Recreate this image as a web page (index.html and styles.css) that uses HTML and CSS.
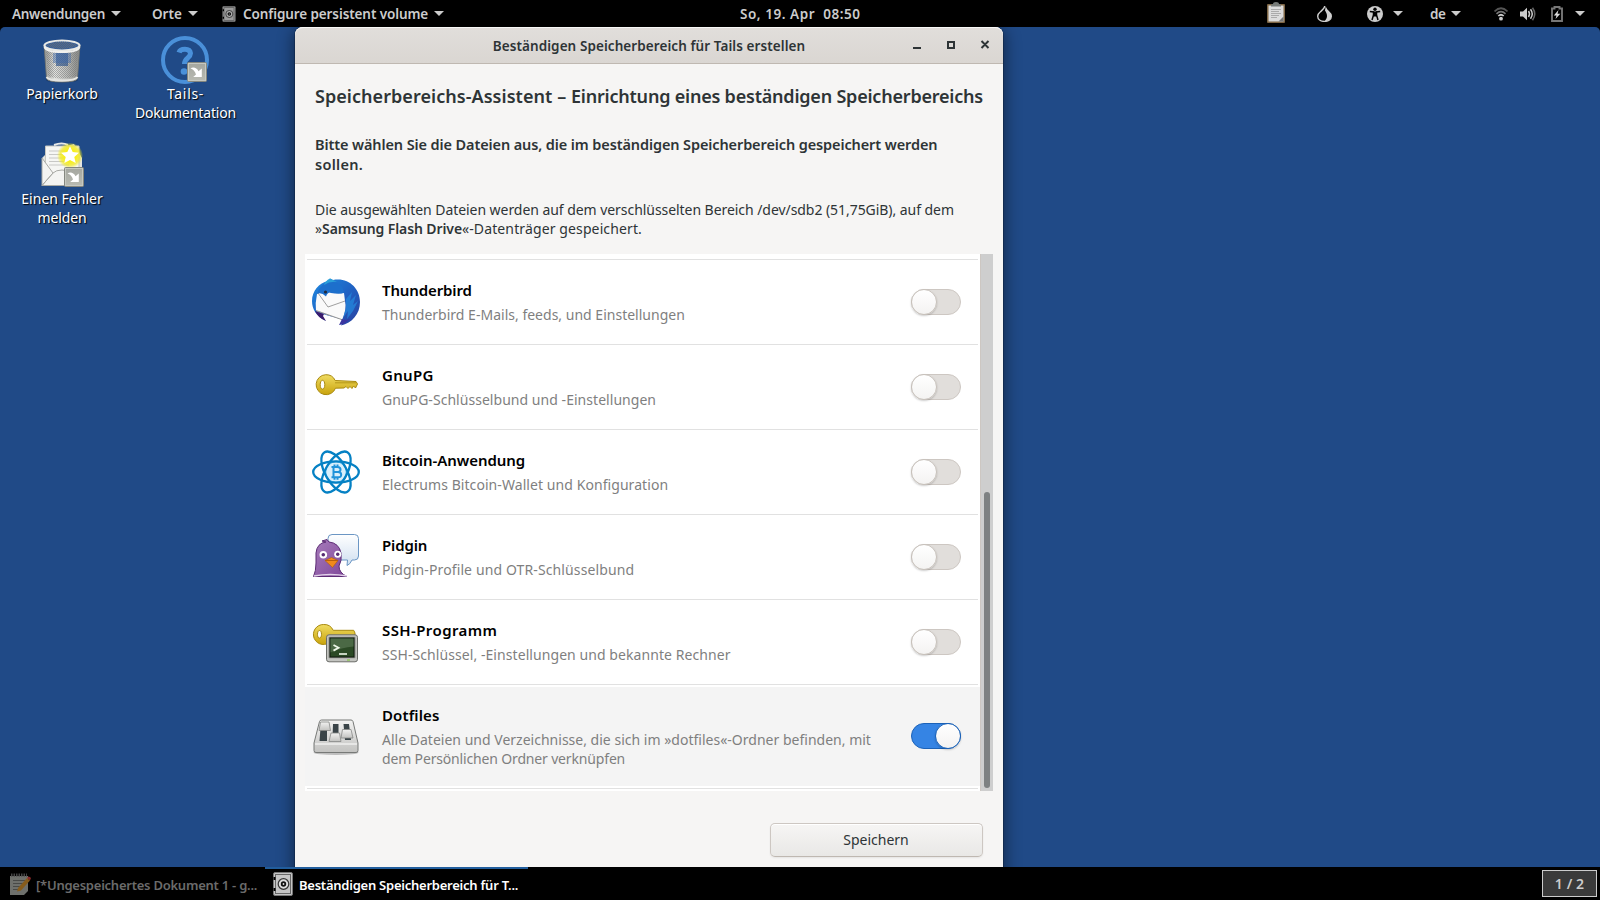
FILE: index.html
```
<!DOCTYPE html>
<html lang="de">
<head>
<meta charset="utf-8">
<title>Beständigen Speicherbereich für Tails erstellen</title>
<link rel="stylesheet" href="styles.css">
</head>
<body>
<svg width="0" height="0" class="defs">
  <defs>
    <linearGradient id="gold" x1="0" y1="0" x2="0" y2="1"><stop offset="0" stop-color="#f0dc62"/><stop offset="1" stop-color="#c9a30c"/></linearGradient>
    <linearGradient id="emb" x1="0" y1="0" x2="0" y2="1"><stop offset="0" stop-color="#a4a69f"/><stop offset="1" stop-color="#b9bbb2"/></linearGradient>
    <linearGradient id="tb" x1="0" y1="0" x2="1" y2="1"><stop offset="0" stop-color="#1f8ae0"/><stop offset=".5" stop-color="#1f63c4"/><stop offset="1" stop-color="#2a3f9e"/></linearGradient>
    <linearGradient id="bub" x1="0" y1="0" x2="0" y2="1"><stop offset="0" stop-color="#fff"/><stop offset="1" stop-color="#cfdff0"/></linearGradient>
    <linearGradient id="pur" x1="0" y1="0" x2="1" y2="1"><stop offset="0" stop-color="#a77dbb"/><stop offset="1" stop-color="#7f4699"/></linearGradient>
    <linearGradient id="met" x1="0" y1="0" x2="0" y2="1"><stop offset="0" stop-color="#f2f2f1"/><stop offset="1" stop-color="#c2c2c0"/></linearGradient>
    <linearGradient id="can" x1="0" y1="0" x2="1" y2="0"><stop offset="0" stop-color="#8f908d"/><stop offset=".3" stop-color="#e3e4e1"/><stop offset=".65" stop-color="#bbbcb9"/><stop offset="1" stop-color="#858683"/></linearGradient>
    <radialGradient id="glow"><stop offset=".45" stop-color="#f7ee1c"/><stop offset=".75" stop-color="#f2ea20" stop-opacity=".75"/><stop offset="1" stop-color="#f2ea20" stop-opacity="0"/></radialGradient>
    <pattern id="mesh" width="2" height="2" patternUnits="userSpaceOnUse"><rect width="1" height="1" fill="#6d6f70"/><rect x="1" y="1" width="1" height="1" fill="#6d6f70"/></pattern>
    <symbol id="emblem" viewBox="0 0 20 20">
      <rect x=".5" y=".5" width="19" height="19" rx="1" fill="url(#emb)" stroke="#85877f"/>
      <rect x="1.5" y="1.5" width="17" height="17" fill="none" stroke="#c6c8c0"/>
      <path d="M3.5 6.500C6 4.600 9.800 5.600 11.500 9.200L14.800 6.500V15H6.200l2.800-2.500C8 9 6 7.300 3.500 6.500z" fill="#fff"/>
    </symbol>
    <symbol id="safe" viewBox="0 0 20 24">
      <rect x=".5" y=".5" width="19" height="23" rx="1.500" fill="#c4c4c4" stroke="#777"/>
      <rect x="2.500" y="2.500" width="15" height="19" fill="none" stroke="#666"/>
      <circle cx="10.500" cy="12" r="5.300" fill="#ddd" stroke="#333" stroke-width="1.200"/>
      <circle cx="10.500" cy="12" r="2.700" fill="#111"/><circle cx="10.500" cy="12" r=".9" fill="#ddd"/>
      <path d="M1.500 5v3M1.500 16v3" stroke="#000" stroke-width="2"/>
    </symbol>
    <symbol id="arrow" viewBox="0 0 10 5"><path d="M0 0h10L5 5z" fill="#ccc"/></symbol>
  </defs>
</svg>

<header class="topbar">
  <div class="menu apps"><span class="t-apps">Anwendungen</span><svg class="arr"><use href="#arrow"/></svg></div>
  <div class="menu places"><span>Orte</span><svg class="arr"><use href="#arrow"/></svg></div>
  <div class="menu current"><svg class="safe-sm"><use href="#safe"/></svg><span class="t-current">Configure persistent volume</span><svg class="arr"><use href="#arrow"/></svg></div>
  <div class="clock">So, 19. Apr  08:50</div>
  <div class="tray">
    <svg class="clip" viewBox="0 0 20 22"><rect x="1" y="2" width="18" height="19" rx="1" fill="#7d6544"/><rect x="2.500" y="3.500" width="15" height="16" fill="#dcdcdc"/><path d="M5 7.500h10M5 9.500h8M5 11.500h10M5 13.500h8M5 15.500h6" stroke="#aaa"/><path d="M17.500 14.500l-5 5h5z" fill="#777"/><path d="M5 4.500V3q0-1 2-1 0-2 3-2t3 2q2 0 2 1v1.500z" fill="#777b78"/></svg>
    <svg class="onion" viewBox="0 0 15 16"><path d="M7.800 0C7.500 2.500 5.500 4 3.400 5.800 1.500 7.300.7 8.700.7 10.300.7 13.300 3.500 15.400 7.500 15.400s6.800-2.100 6.800-5.100c0-2-1-3.200-2.800-4.700C9.800 4.200 8.500 3 9 1.500" fill="none" stroke="#d0d0d0" stroke-width="1.400"/><path d="M8 4.500c2.800 4 2.800 7.500-.5 10.900 4 0 6.800-2.100 6.800-5.100 0-2-1-3.200-2.800-4.700C10 4.500 9 3.700 8.400 2.500z" fill="#d0d0d0"/></svg>
    <svg class="a11y" viewBox="0 0 16 16"><circle cx="8" cy="8" r="8" fill="#ccc"/><circle cx="8" cy="3.300" r="1.700"/><path d="M2.800 5.500L6.500 6v3L5 14M13.200 5.500L9.500 6v3l1.500 5" fill="none" stroke="#000" stroke-width="1.500"/><path d="M6 5.500h4v5H6z"/></svg>
    <svg class="arr g10"><use href="#arrow"/></svg>
    <span class="lang">de</span>
    <svg class="arr g6"><use href="#arrow"/></svg>
    <svg class="wifi" viewBox="0 0 14 14"><path d="M.5 4.500Q7-2 13.500 4.500" fill="none" stroke="#555" stroke-width="1.700"/><path d="M2.500 6.800Q7 2.500 11.500 6.800" fill="none" stroke="#777" stroke-width="1.700"/><path d="M4.300 9Q7 6.500 9.700 9" fill="none" stroke="#ccc" stroke-width="1.700"/><circle cx="7" cy="11.700" r="1.900" fill="#ccc"/></svg>
    <svg class="vol" viewBox="0 0 16 14"><path d="M0 4.500h3L7 .8v12.400L3 9.500H0z" fill="#ccc"/><path d="M8.500 4q2 3 0 6M10.500 2.300q3.500 4.700 0 9.400" fill="none" stroke="#ccc" stroke-width="1.500"/><path d="M12.500.8q4.500 6.200 0 12.400" fill="none" stroke="#666" stroke-width="1.500"/></svg>
    <svg class="bat" viewBox="0 0 12 16"><path d="M1 2.500h2.500V1h5v1.500H11V15H1z" fill="none" stroke="#777" stroke-width="1.900"/><path d="M7.500 4L2.800 9.500h2.700L4.500 13 9.300 7.800H6.500z" fill="#ddd"/></svg>
    <svg class="arr g12"><use href="#arrow"/></svg>
  </div>
</header>

<main class="screen">
  <div class="icons">
    <div class="launcher">
      <svg viewBox="0 0 48 48" width="48" height="48">
        <ellipse cx="24" cy="44" rx="16" ry="2.500" fill="#102a50" opacity=".5"/>
        <path d="M6 9l2.500 33q0 4 15.500 4t15.500-4L42 9z" fill="url(#can)" stroke="#73756f" stroke-width=".8"/>
        <path d="M8 14l2 26q13 5 28 0l2-26z" fill="url(#mesh)" opacity=".5"/>
        <path d="M18 17h12v13H18z" fill="#204a87" opacity=".6"/><path d="M15 17h18v10H15z" fill="#3d68a8" opacity=".45"/>
        <ellipse cx="24" cy="9.500" rx="17.500" ry="5" fill="#365f9a" stroke="#e8e9e6" stroke-width="2.200"/>
        <path d="M8 9.500q16-8 32 0-16 7-32 0" fill="url(#mesh)" opacity=".8"/>
        <path d="M6.500 11q1 5 17.500 5t17.500-5" fill="none" stroke="#f0f0ee" stroke-width="1.800"/>
        <path d="M8.500 41q2 3.500 15.500 3.500T39.500 41" fill="none" stroke="#e4e5e2" stroke-width="1.800"/>
      </svg>
      <span class="l-trash">Papierkorb</span>
    </div>
    <div class="launcher docs">
      <svg viewBox="0 0 48 48" width="48" height="48">
        <circle cx="24" cy="24" r="22" fill="none" stroke="#4a90d9" stroke-width="4"/>
        <path d="M18 16.500q1-3.200 6-3.200t5.500 4c0 4.700-6 4.500-6 10.700" fill="none" stroke="#4a90d9" stroke-width="5"/>
        <circle cx="23" cy="35.500" r="3.300" fill="#4a90d9"/>
        <use href="#emblem" x="26" y="26" width="20" height="20"/>
      </svg>
      <span><span class="l-tails">Tails-</span><br><span class="l-doc">Dokumentation</span></span>
    </div>
    <div class="launcher">
      <svg viewBox="0 -1 48 48" width="48" height="48">
        <path d="M4 16l8-8 24-6 8 14v27H4z" fill="#e4e5e1"/>
        <path d="M7.500 4H41v26L24 38 7.500 28z" fill="#f6f6f4" stroke="#c5c6c0"/>
        <path d="M16 3q8-3 14 0" fill="none" stroke="#e8e8e6" stroke-width="2"/>
        <path d="M11 9h16M11 12.500h14M11 16h16M11 19.500h17M11 23h20" stroke="#c8c8c6"/>
        <path d="M4 16l11 15L4 43.500zM4 43.500L15 31q3-3 9-3t9 3l11 12.500z" fill="#f4f4f2" stroke="#a9aaa5"/>
        <circle cx="32" cy="13.500" r="13" fill="url(#glow)"/>
        <path d="M32 4.300l2.700 5.700 6.300.7-4.700 4.200 1.400 6.200-5.700-3.200-5.700 3.200 1.400-6.200-4.700-4.200 6.300-.7z" fill="#fff"/>
        <use href="#emblem" x="26" y="25" width="20" height="20"/>
      </svg>
      <span>Einen Fehler<br><span class="l-doc">melden</span></span>
    </div>
  </div>

  <section class="window">
    <div class="titlebar">
      <h1>Beständigen Speicherbereich für Tails erstellen</h1>
      <svg class="controls" width="78" height="12" viewBox="0 0 78 12" fill="none" stroke="#2e3436" stroke-width="2"><path d="M0 9h8M35 3h6v6h-6zM68.500 2l7 7M75.500 2l-7 7"/></svg>
    </div>
    <h2><span class="h-left">Speicherbereichs-Assistent – </span>Einrichtung eines beständigen Speicherbereichs</h2>
    <h3>Bitte wählen Sie die Dateien aus, die im beständigen Speicherbereich gespeichert werden<br><span class="h-rest">sollen.</span></h3>
    <p class="info">Die ausgewählten Dateien werden auf dem verschlüsselten Bereich /dev/sdb2 (51,75GiB), auf dem<br>»<b>Samsung Flash Drive</b><span class="info-rest">«-Datenträger gespeichert.</span></p>

    <div class="scroller">
      <div class="list">
        <div class="row">
          <svg viewBox="0 0 48 48">
            <path d="M18 .5l3 1.500C36-1 48 10 48 24c0 12-8 21-19 23.500l3-5.500-18-5-9-3L14 43C4 38 0 31 0 23 0 13 7 5 16 3z" fill="url(#tb)"/>
            <path d="M5 16q6-4 14-1 8 1 13 0l1 8q2 8-3 19L4 33q-1-8 1-17z" fill="#fafafa"/>
            <path d="M6 15l10 14 17-6" fill="none" stroke="#888" stroke-width=".8"/>
            <path d="M4 32.500l27 9.500" stroke="#777" stroke-width=".8"/>
            <path d="M3 33l9 3-1 2 3 5Q6 40 3 33z" fill="#3a1c6e"/>
            <path d="M5 16Q8 5 19 3.500q12 1 13 11-6 2-10 0-6-2-8 4-5-5-9-2.500z" fill="#1d6fcc"/>
            <path d="M18 .5Q13 3 12 7q6-4 13-3z" fill="#2ba0d8"/>
            <path d="M34 21l6-7-2 9 6-6-3 10 5-4-5 10-6 8 1-8-5 7 3-10z" fill="#2487dc" opacity=".75"/>
            <path d="M30 41l-3 6 5-1 6-5-4 1z" fill="#3a35a0"/>
            <circle cx="13.500" cy="14" r="1.600" fill="#21293c"/>
          </svg>
          <div class="text"><h4>Thunderbird</h4><p class="w-tight">Thunderbird E-Mails, feeds, und Einstellungen</p></div>
          <span class="switch"></span>
        </div>
        <div class="row">
          <svg viewBox="0 0 48 48">
            <path d="M13.700 11.700a10 10 0 0 1 9.500 5.800L44 18.500l1.500 2.500-2 4-2-2-1.500 2.500-2-2-2 2-2-2-2 1.500-8.500.2A10 10 0 1 1 13.700 11.700zM10.500 17.300c-1.400 0-2.300 2-2.300 4.400s.9 4.400 2.300 4.400 2.300-2 2.300-4.400-.9-4.400-2.300-4.400z" fill="url(#gold)" stroke="#a98a10"/>
            <path d="M23 19.800h21" stroke="#a98a10" stroke-width=".8"/>
          </svg>
          <div class="text"><h4 class="w-gnupg">GnuPG</h4><p>GnuPG-Schlüsselbund und -Einstellungen</p></div>
          <span class="switch"></span>
        </div>
        <div class="row">
          <svg viewBox="0 0 48 48">
            <circle cx="24" cy="24" r="10.500" fill="#d9effb" stroke="#52b4e8" stroke-width="1.500"/>
            <g fill="none" stroke="#0581c4" stroke-width="2.300"><ellipse cx="24" cy="24" rx="22.800" ry="10.600"/><ellipse cx="24" cy="24" rx="22.800" ry="10.600" transform="rotate(60 24 24)"/><ellipse cx="24" cy="24" rx="22.800" ry="10.600" transform="rotate(120 24 24)"/></g>
            <path d="M19.500 19h6q3 0 3 2.500t-3 2.500h-4 4.500q3.200 0 3.200 2.700T26 29.300h-6.500M21.500 19v10M22.500 16.500V19M25.500 16.500V19M22.500 29.300v2.500M25.500 29.300v2.500" fill="none" stroke="#1f93da" stroke-width="2"/>
          </svg>
          <div class="text"><h4 class="w-bitcoin">Bitcoin-Anwendung</h4><p class="w-electrum">Electrums Bitcoin-Wallet und Konfiguration</p></div>
          <span class="switch"></span>
        </div>
        <div class="row">
          <svg viewBox="0 0 48 48">
            <path d="M20 1.500h22.500q4 0 4 4V23q0 4-4 4H40q-2 4.500-5 5.500l.5-5.500H20q-4 0-4-4V5.500q0-4 4-4z" fill="url(#bub)" stroke="#6b96c4"/>
            <path d="M1.500 43.500Q4 38 4 30V20Q5 10 14 9l-4-1 5-1.500 2 2.500q10 1 12 11 1 8-2 13 0 7 8 10.500z" fill="url(#pur)" stroke="#5c2b74"/>
            <path d="M2 43q16-3 33 0" fill="none" stroke="#e3d3ea" stroke-width="1.500"/>
            <circle cx="11.300" cy="21.700" r="3.800" fill="#fff"/><circle cx="25.700" cy="21.300" r="3.500" fill="#fff"/>
            <circle cx="11.300" cy="21.700" r="1.800" fill="#552a70"/><circle cx="25.700" cy="21.300" r="1.700" fill="#552a70"/>
            <path d="M13 27.500l6.500-3 6.500 3-5.500 7z" fill="#f08a1c" stroke="#a95b10" stroke-width=".6"/><path d="M13 27.500h13" stroke="#b8600c"/>
          </svg>
          <div class="text"><h4>Pidgin</h4><p class="w-pidgin">Pidgin-Profile und OTR-Schlüsselbund</p></div>
          <span class="switch"></span>
        </div>
        <div class="row">
          <svg viewBox="0 0 48 48">
            <path d="M11.700 6.500a10 10 0 0 1 9.500 5.800h20.500L43 15v8H19a10 10 0 1 1-7.300-16.500zM7.500 12.500c-1.300 0-2 1.700-2 3.800s.7 3.800 2 3.800 2-1.700 2-3.800-.7-3.800-2-3.800z" fill="url(#gold)" stroke="#a98a10"/>
            <rect x="14.500" y="16.800" width="31" height="27" rx="2.500" fill="#c3c4c0" stroke="#6b6d69"/>
            <rect x="16.500" y="18.800" width="27" height="21.500" rx="1" fill="#8b8d88"/>
            <rect x="18" y="20" width="24" height="19" fill="#2b4a25" stroke="#101a0e"/>
            <path d="M18.500 20.500h23v8q-12 1-23 6z" fill="#54704d" opacity=".8"/>
            <path d="M21.500 27l5 2.800-5 2.800" fill="none" stroke="#eef7e8" stroke-width="1.800"/><path d="M27 36h8" stroke="#eef7e8" stroke-width="1.600"/>
            <path d="M35 42h3" stroke="#8fc75c" stroke-width="1.500"/>
          </svg>
          <div class="text"><h4 class="w-ssh">SSH-Programm</h4><p class="w-electrum">SSH-Schlüssel, -Einstellungen und bekannte Rechner</p></div>
          <span class="switch"></span>
        </div>
        <div class="row selected">
          <svg viewBox="0 0 48 48">
            <ellipse cx="24" cy="40.500" rx="22.500" ry="2.500" fill="#999" opacity=".6"/>
            <path d="M9.500 8h29.500q1.500 0 2 1.500L46 31v7.500q0 2-2 2H4q-2 0-2-2V31L7.500 9.500Q8 8 9.500 8z" fill="url(#met)" stroke="#777977"/>
            <path d="M3 32h42" stroke="#fff"/>
            <path d="M8.500 16h6.500v13H7.500zM21 12h5.500v14H20.500zM31.500 12H37l2 16h-6z" fill="#3a4448"/>
            <g fill="url(#met)" stroke="#868886" stroke-width=".8"><path d="M8.500 10h8.500l1.500 8.500H7z"/><path d="M19 21h8.500l1.500 8.500H17z"/><path d="M30.500 17.500h8.500l2 8.500H29z"/></g>
          </svg>
          <div class="text"><h4 class="w-dot">Dotfiles</h4><p class="w-tight">Alle Dateien und Verzeichnisse, die sich im »dotfiles«-Ordner befinden, mit<br><span class="w-dem">dem Persönlichen Ordner verknüpfen</span></p></div>
          <span class="switch on"></span>
        </div>
      </div>
      <div class="track"><div class="thumb"></div></div>
    </div>

    <button class="save">Speichern</button>
  </section>
</main>

<footer class="taskbar">
  <div class="task faded">
    <svg width="22" height="23" viewBox="0 0 22 23"><path d="M1 3h18v15l-4 4H1z" fill="#8a8c88"/><path d="M2 2h16" stroke="#555" stroke-width="3" stroke-dasharray="1.500 1"/><path d="M4 7.500h12M4 10.500h12M4 13.500h9M4 16.500h6" stroke="#5a5c59"/><path d="M9 15L18 5l3 2.500L12 17.500l-4 1z" fill="#a87424"/><path d="M18 5l1.500-1.500q1.500 0 2.500 1.500L21 7.500z" fill="#a33"/></svg>
    <span>[*Ungespeichertes Dokument 1 - g...</span>
  </div>
  <div class="task active">
    <svg width="20" height="24"><use href="#safe"/></svg>
    <span>Beständigen Speicherbereich für T...</span>
  </div>
  <div class="pager">1 / 2</div>
</footer>
</body>
</html>
```
FILE: styles.css
```
*, *::before { box-sizing: border-box; }

body {
  margin: 0;
  width: 1600px;
  height: 900px;
  display: flex;
  flex-direction: column;
  overflow: hidden;
  background: #000;
  color: #2e3436;
  font: 14px/19px "Noto Sans", "Open Sans", sans-serif;
}

h1, h2, h3, h4, p { margin: 0; }
h1, h2, h3, h4, b { font-weight: 600; }
svg { display: block; flex: none; }
.defs { position: absolute; }

/* top panel */
.topbar {
  flex: none;
  height: 27px;
  display: grid;
  grid-template-columns: 152px 70px 518px 1fr auto;
  align-items: center;
  color: #ccc;
  font-size: 13.5px;
  font-weight: 600;
  white-space: nowrap;
}
.menu { display: flex; align-items: center; }
.menu span, .clock, .lang { padding-top: 1px; }
.apps { padding-left: 12px; }
.arr { width: 10px; height: 5px; margin-left: 6px; }
.menu .t-apps { letter-spacing: -.28px; }
.menu .t-current { letter-spacing: -.1px; margin-left: 7px; }
.safe-sm { width: 14px; height: 16px; opacity: .8; }
.clock { white-space: pre; letter-spacing: .55px; }
.tray { display: flex; align-items: center; padding-right: 15px; }
.clip { width: 20px; height: 22px; margin: -2px -1px 0 0; }
.onion { width: 15px; height: 16px; margin-left: 32px; }
.a11y { width: 16px; height: 16px; margin-left: 35px; }
.g10 { margin-left: 10px; }
.g6 { margin-left: 6px; }
.g12 { margin-left: 12px; }
.lang { margin-left: 27px; width: 15px; letter-spacing: -.5px; }
.wifi { width: 14px; height: 14px; margin-left: 33px; }
.vol { width: 16px; height: 14px; margin-left: 12px; }
.bat { width: 12px; height: 16px; margin-left: 15px; }

/* desktop */
.screen {
  position: relative;
  flex: none;
  height: 840px;
  overflow: hidden;
  background: #204a87;
  border-radius: 5px 5px 0 0;
}
.icons {
  display: grid;
  grid-template-columns: 124px 123px;
  grid-auto-rows: 105px;
  padding-top: 9px;
}
.launcher {
  display: flex;
  flex-direction: column;
  align-items: center;
  text-align: center;
  color: #fff;
  text-shadow: 1px 1px 1px #000;
}
.docs svg { margin-right: 1px; }
.l-trash { letter-spacing: -.1px; }
.l-tails { letter-spacing: .7px; }
.l-doc { letter-spacing: -.15px; }

/* window */
.window {
  position: absolute;
  left: 295px;
  top: 0;
  width: 708px;
  height: 860px;
  display: flex;
  flex-direction: column;
  background: #f6f5f4;
  border-radius: 8px 8px 0 0;
  box-shadow: 0 0 0 1px rgba(0, 0, 0, .2), 0 3px 16px 2px rgba(0, 0, 0, .45);
}
.titlebar {
  height: 37px;
  display: grid;
  grid-template-columns: 1fr auto 1fr;
  align-items: center;
  background: linear-gradient(#e1dedb, #dad6d2);
  border-bottom: 1px solid #bfb8b1;
  border-radius: 8px 8px 0 0;
  box-shadow: inset 0 1px #f8f7f6;
}
.titlebar h1 {
  grid-column: 2;
  padding-top: 2px;
  font-size: 13.5px;
  line-height: 19px;
  letter-spacing: .08px;
}
.controls { justify-self: end; margin-right: 12px; }

.window h2 {
  margin: 20px 0 0 20px;
  font-size: 18px;
  line-height: 24px;
  letter-spacing: -.21px;
  white-space: nowrap;
}
.h-left { letter-spacing: .05px; }
.window h3 {
  margin: 26px 0 0 20px;
  font-size: 14.5px;
  line-height: 20px;
  letter-spacing: -.11px;
  white-space: nowrap;
}
.h-rest { letter-spacing: .3px; }
.info {
  margin: 26px 0 0 20px;
  letter-spacing: -.055px;
  white-space: nowrap;
}
.info b { letter-spacing: -.1px; }
.info-rest { letter-spacing: .12px; }

.scroller {
  display: flex;
  margin: 16px 10px 0;
  height: 537px;
}
.list {
  width: 675px;
  padding-top: 5px;
  background: #fff;
}
.row {
  display: flex;
  align-items: center;
  height: 85px;
  padding: 1px 19px 0 7px;
  background: linear-gradient(#e1e1e1, #e1e1e1) 2px 0 / 671px 1px no-repeat;
}
.row > svg { width: 48px; height: 48px; }
.row.selected {
  height: 107px;
  padding-bottom: 3px;
  background:
    linear-gradient(#e1e1e1, #e1e1e1) 2px 0 / 671px 1px no-repeat,
    linear-gradient(#e1e1e1, #e1e1e1) 2px 104px / 671px 1px no-repeat,
    linear-gradient(#f4f4f4, #f4f4f4) 0 3px / 100% 99px no-repeat;
}
.row.selected > svg, .row.selected > .switch { margin-bottom: 1px; }
.text { flex: 1; margin-left: 22px; white-space: nowrap; }
.text h4 {
  margin-bottom: 5px;
  font-size: 15px;
  line-height: 20px;
  letter-spacing: -.13px;
  color: #000;
}
.text p { color: #7f7f7f; letter-spacing: .04px; }
.text .w-tight { letter-spacing: .01px; }
.text .w-gnupg { letter-spacing: .3px; }
.text .w-bitcoin { letter-spacing: -.05px; }
.text .w-electrum { letter-spacing: .07px; }
.text .w-ssh { letter-spacing: .4px; }
.text .w-dot { letter-spacing: .12px; }
.text .w-pidgin { letter-spacing: .12px; }
.text .w-dem { letter-spacing: -.16px; }

.switch {
  display: flex;
  width: 50px;
  height: 26px;
  background: #e1dedb;
  border: 1px solid #cdc7c2;
  border-radius: 13px;
}
.switch::before {
  content: "";
  width: 26px;
  height: 26px;
  margin: -1px;
  border: 1px solid #c8c2bc;
  border-radius: 50%;
  background: linear-gradient(#fff, #f4f3f2);
  box-shadow: 0 1px 2px rgba(0, 0, 0, .2);
}
.switch.on {
  justify-content: flex-end;
  background: #3584e4;
  border-color: #1b62b8;
}
.switch.on::before { border-color: #1b62b8; }

.track {
  display: flex;
  align-items: flex-end;
  width: 13px;
  padding: 0 3px 3px;
  background: #cecece;
  border-left: 1px solid #cdc7c2;
}
.thumb { width: 6px; height: 296px; border-radius: 3px; background: #7e8182; }

.save {
  align-self: flex-end;
  width: 213px;
  height: 34px;
  margin: 32px 20px 0 0;
  padding: 0 1px 1px 0;
  font: inherit;
  color: #2e3436;
  background: linear-gradient(#f6f5f4, #e9e8e6);
  border: 1px solid #cdc7c2;
  border-bottom-color: #bfb8b1;
  border-radius: 5px;
  box-shadow: inset 0 1px #fff, 0 1px 2px rgba(0, 0, 0, .07);
}

/* bottom panel */
.taskbar {
  flex: none;
  height: 33px;
  display: flex;
  background: #000;
  font-size: 13px;
  font-weight: 600;
  letter-spacing: -.24px;
  white-space: nowrap;
}
.task { display: flex; align-items: center; height: 33px; border-top: 2px solid transparent; }
.task svg { margin-top: -1px; }
.faded { width: 265px; padding-left: 9px; gap: 5px; color: #6b6b6b; }
.faded svg { opacity: .8; }
.active { width: 263px; padding-left: 8px; gap: 6px; color: #fff; border-top-color: #215d9c; }
.task span { padding-top: 1px; }
.pager {
  width: 55px;
  height: 27px;
  margin: 3px 3px 0 auto;
  border: 1px solid #ccc;
  background: #3a3a3a;
  color: #ccc;
  font-size: 14px;
  line-height: 25px;
  letter-spacing: .1px;
  text-align: center;
}
```
